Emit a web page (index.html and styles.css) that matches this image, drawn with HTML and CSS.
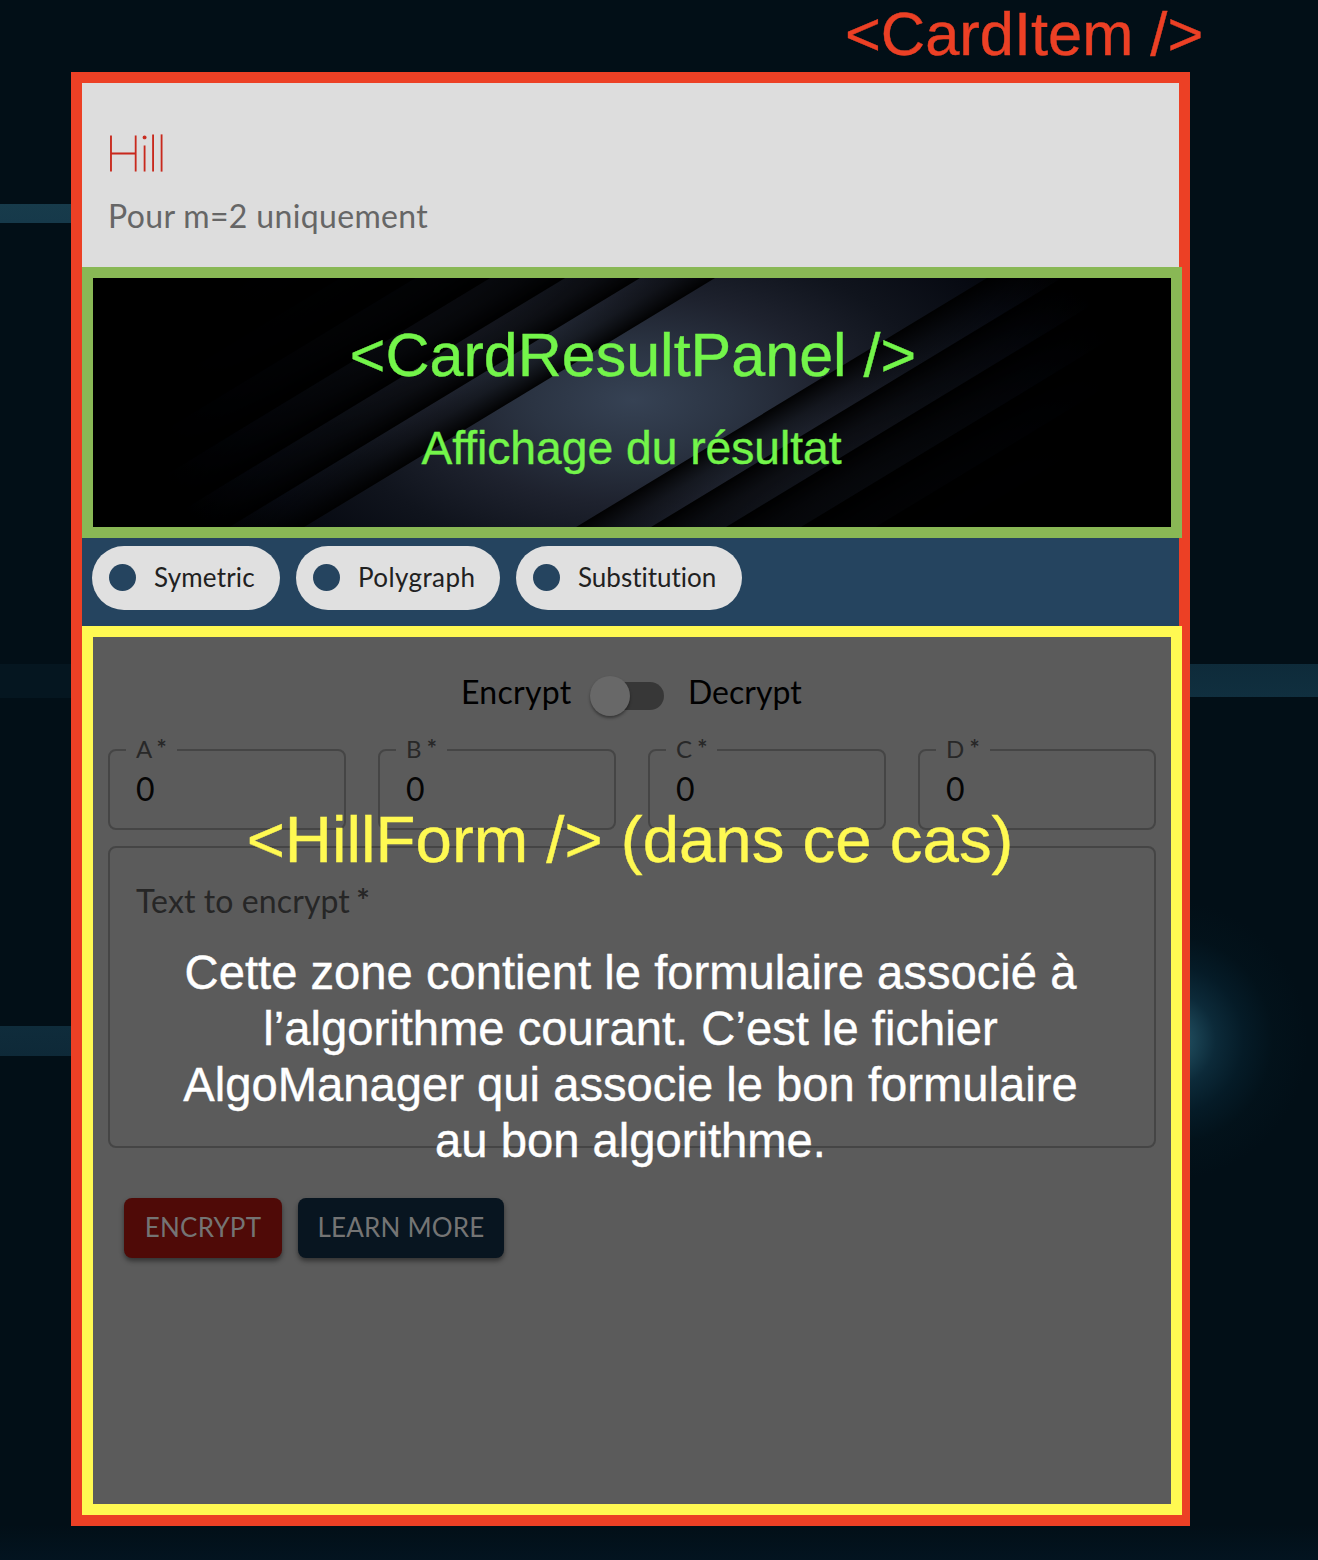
FILE: index.html
```html
<!DOCTYPE html>
<html lang="fr">
<head>
<meta charset="utf-8">
<title>CardItem</title>
<link rel="stylesheet" href="styles.css">
</head>
<body>
<main class="page">
  <div class="note note-item"><span>&lt;CardItem /&gt;</span></div>
  <article class="card">
    <header class="card-header">
      <h1 class="card-title">Hill</h1>
      <p class="card-subtitle">Pour m=2 uniquement</p>
    </header>

    <section class="result">
      <svg class="result-art" viewBox="0 0 1078 249" preserveAspectRatio="none" aria-hidden="true">
        <defs>
          <radialGradient id="glow" gradientUnits="userSpaceOnUse" cx="0" cy="0" r="1" gradientTransform="translate(540 122) scale(500 260)">
            <stop offset="0" stop-color="#364254"/>
            <stop offset=".2" stop-color="#2b3443"/>
            <stop offset=".4" stop-color="#1e222e"/>
            <stop offset=".6" stop-color="#10141d"/>
            <stop offset=".8" stop-color="#070a12"/>
            <stop offset="1" stop-color="#000"/>
          </radialGradient>
          <linearGradient id="left">
            <stop offset="0" stop-color="#000" stop-opacity=".12"/>
            <stop offset=".45" stop-color="#000" stop-opacity=".4"/>
            <stop offset="1" stop-color="#000" stop-opacity=".95"/>
          </linearGradient>
          <linearGradient id="right">
            <stop offset="0" stop-color="#000" stop-opacity=".95"/>
            <stop offset=".55" stop-color="#000" stop-opacity=".4"/>
            <stop offset="1" stop-color="#000" stop-opacity=".12"/>
          </linearGradient>
        </defs>
        <rect width="1078" height="249" fill="url(#glow)"/>
        <g transform="matrix(1 0 -1.65 1 0 0)">
          <rect x="172" width="75" height="249" fill="url(#left)"/>
          <rect x="247" width="75" height="249" fill="url(#left)"/>
          <rect x="322" width="75" height="249" fill="url(#left)"/>
          <rect x="397" width="75" height="249" fill="url(#left)"/>
          <rect x="472" width="75" height="249" fill="url(#left)"/>
          <rect x="547" width="75" height="249" fill="url(#left)"/>
          <rect x="894" width="75" height="249" fill="url(#right)"/>
          <rect x="969" width="75" height="249" fill="url(#right)"/>
          <rect x="1044" width="75" height="249" fill="url(#right)"/>
          <rect x="1119" width="75" height="249" fill="url(#right)"/>
          <rect x="1194" width="75" height="249" fill="url(#right)"/>
          <rect x="1269" width="75" height="249" fill="url(#right)"/>
          <rect x="-200" width="747" height="249" opacity=".28"/>
          <rect x="-200" width="672" height="249" opacity=".35"/>
          <rect x="-200" width="597" height="249" opacity=".45"/>
          <rect x="-200" width="522" height="249" opacity=".5"/>
          <rect x="969" width="700" height="249" opacity=".28"/>
          <rect x="1044" width="625" height="249" opacity=".35"/>
          <rect x="1119" width="550" height="249" opacity=".45"/>
          <rect x="1194" width="475" height="249" opacity=".5"/>
        </g>
      </svg>
      <div class="note note-result"><span>&lt;CardResultPanel /&gt;</span></div>
      <div class="note note-display"><span>Affichage du résultat</span></div>
    </section>

    <ul class="tags">
      <li class="tag"><span>Symetric</span></li>
      <li class="tag"><span>Polygraph</span></li>
      <li class="tag"><span>Substitution</span></li>
    </ul>

    <section class="form">
      <div class="mode">
        <span class="mode-encrypt">Encrypt</span>
        <span class="switch"></span>
        <span class="mode-decrypt">Decrypt</span>
      </div>
      <div class="keys">
        <fieldset class="field"><legend>A <b>*</b></legend><span>0</span></fieldset>
        <fieldset class="field"><legend>B <b>*</b></legend><span>0</span></fieldset>
        <fieldset class="field"><legend>C <b>*</b></legend><span>0</span></fieldset>
        <fieldset class="field"><legend>D <b>*</b></legend><span>0</span></fieldset>
      </div>
      <div class="textarea"><span>Text to encrypt <b>*</b></span></div>
      <div class="actions">
        <button class="btn btn-red"><span>ENCRYPT</span></button>
        <button class="btn btn-blue"><span>LEARN MORE</span></button>
      </div>
      <div class="note note-form"><span>&lt;HillForm /&gt; (dans ce cas)</span></div>
      <div class="note note-text"><span>Cette zone contient le formulaire associé à<br>l’algorithme courant. C’est le fichier<br>AlgoManager qui associe le bon formulaire<br>au bon algorithme.</span></div>
    </section>
  </article>
</main>
</body>
</html>
```
FILE: styles.css
```css
* { box-sizing: border-box; }

body {
  margin: 0;
  font-family: Lato, "Open Sans", sans-serif;
  font-variant-ligatures: none;
}

.page {
  position: relative;
  height: 1560px;
  padding: 72px 0 0 71px;
  background:
    radial-gradient(circle 140px at 1168px 1040px, #285a6c 0, #1c4657 16%, #0c2a39 34%, #051b27 54%, rgba(3, 20, 29, .6) 75%, rgba(2, 15, 23, 0) 100%),
    linear-gradient(#173b4b, #16394a) 0 204px / 100px 19px no-repeat,
    linear-gradient(#051620, #051620) 0 664px / 100px 34px no-repeat,
    linear-gradient(#0f2c3b, #0e2938) 0 1026px / 100px 30px no-repeat,
    linear-gradient(#0e2b3a, #102f3f) 1180px 664px / 138px 33px no-repeat,
    linear-gradient(#020f17 0, #020f17 1525px, #031420 1560px);
}

.note {
  position: absolute;
  font-family: "Liberation Sans", Arial, sans-serif;
  text-align: center;
  white-space: nowrap;
  -webkit-text-stroke: .4px currentColor;
}

.note-item {
  top: 0;
  left: 845px;
  font-size: 61.4px;
  line-height: 68px;
  color: #ec4025;
}

.card {
  width: 1119px;
  height: 1453.5px;
  border: 11px solid #ec4025;
  display: flex;
  flex-direction: column;
}

.card-header {
  height: 184px;
  padding: 39px 26px 0;
  background: #ddd;
}

.card-title {
  margin: 0 0 0 -3px;
  font-size: 49px;
  font-weight: 100;
  line-height: 60px;
  letter-spacing: -1.7px;
  color: #c8281c;
  -webkit-text-stroke: 1.2px #c8281c;
}

.card-subtitle {
  margin: 14px 0 0;
  font-size: 32px;
  line-height: 40px;
  letter-spacing: .35px;
  color: #666;
}

.result {
  position: relative;
  height: 271px;
  margin-right: -3px;
  border: 11px solid #89b855;
  background: #000;
}

.result-art {
  display: block;
  width: 100%;
  height: 100%;
}

.note-result,
.note-display {
  left: 0;
  right: 0;
  color: #73f54a;
}

.note-result {
  top: 42px;
  left: 2px;
  font-size: 61px;
  line-height: 70px;
}

.note-display {
  top: 144px;
  right: 1px;
  font-size: 46.2px;
  line-height: 52px;
}

.tags {
  display: flex;
  gap: 16px;
  height: 88px;
  margin: 0;
  padding: 8px 10px;
  list-style: none;
  background: #25445f;
}

.tag {
  display: flex;
  align-items: center;
  gap: 18px;
  height: 64px;
  padding: 0 0 0 17px;
  border-radius: 32px;
  background: #e0e0e0;
  font-size: 26px;
  letter-spacing: .2px;
  color: #212121;
}

.tag span { margin-top: -2px; }

.tag::before {
  content: "";
  width: 27px;
  height: 27px;
  border-radius: 50%;
  background: #25445f;
}

.tag:nth-child(1) { width: 188px; }
.tag:nth-child(2) { width: 204px; letter-spacing: .4px; }
.tag:nth-child(3) { width: 226px; letter-spacing: 0; }

.form {
  position: relative;
  height: 889px;
  margin-right: -3px;
  padding: 30px 15px 0;
  border: 11px solid #fff952;
  background: #5b5b5b;
}

.mode {
  display: grid;
  grid-template-columns: 110px 74px 114px;
  column-gap: 18px;
  align-items: center;
  height: 52px;
  margin-left: 354px;
  font-size: 32px;
  color: #000;
}

.mode-encrypt { margin: -2px 0 0 -1px; letter-spacing: .3px; }
.mode-decrypt { margin: -2px 0 0 6px; }

.switch {
  position: relative;
  height: 28px;
  margin-top: 6px;
  border-radius: 14px;
  background: linear-gradient(90deg, transparent 20px, #373737 20px);
}

.switch::before {
  content: "";
  position: absolute;
  top: -6px;
  left: 0;
  width: 40px;
  height: 40px;
  border-radius: 50%;
  background: #686868;
  box-shadow: 0 2px 3px rgba(0, 0, 0, .4);
}

.keys {
  display: grid;
  grid-template-columns: repeat(4, 238px);
  gap: 32px;
  margin-top: 20px;
}

.field {
  height: 91px;
  margin: 0;
  padding: 0 16px;
  border: 2px solid #454545;
  border-radius: 8px;
  font-size: 32px;
  line-height: 38px;
  color: #060606;
}

.field legend {
  height: 22px;
  padding: 0 10px;
  font-size: 24px;
  line-height: 20px;
  color: #282828;
}

.field b { margin-left: -1px; }

.field span {
  display: block;
  padding: 9px 0 0 10px;
}

.textarea {
  height: 302px;
  margin-top: 16px;
  padding: 33px 26px;
  border: 2px solid #454545;
  border-radius: 8px;
  font-size: 32px;
  line-height: 40px;
  letter-spacing: .1px;
  color: #262626;
}

.textarea b { margin-left: -2px; }

.actions {
  display: flex;
  gap: 16px;
  margin: 50px 0 0 16px;
}

.btn {
  height: 60px;
  padding: 0 0 2px;
  border: 0;
  border-radius: 8px;
  box-shadow: 0 3px 5px rgba(0, 0, 0, .45);
  font: 26px Lato, sans-serif;
  letter-spacing: .2px;
  color: #747474;
}

.btn-red { width: 158px; background: #4f0a07; }
.btn-blue { width: 206px; background: #081520; }

.note-form {
  top: 165px;
  left: 0;
  right: 4px;
  font-size: 65.4px;
  line-height: 76px;
  color: #fff952;
}

.note-text {
  top: 308px;
  left: 0;
  right: 3px;
  font-size: 47.2px;
  line-height: 56px;
  color: #fff;
}
```
